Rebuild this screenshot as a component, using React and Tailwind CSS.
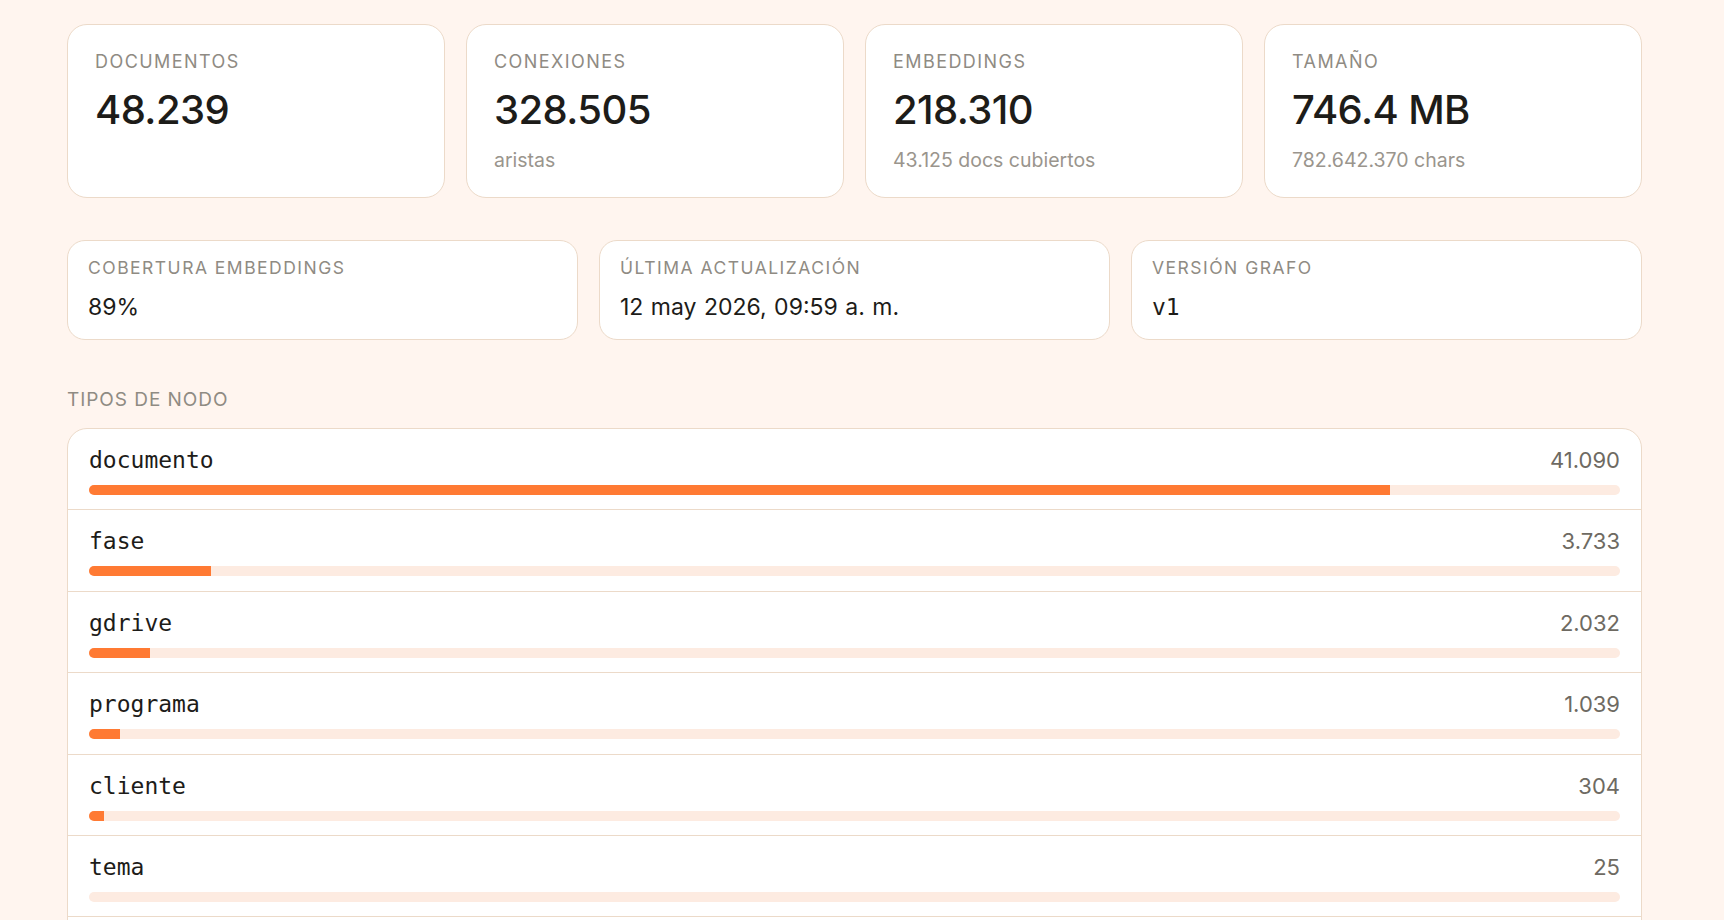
import React from "react";

const sans = { fontFamily: "Inter, 'Noto Sans', sans-serif" };

const stats = [
  { label: "DOCUMENTOS", value: "48.239", sub: "" },
  { label: "CONEXIONES", value: "328.505", sub: "aristas" },
  { label: "EMBEDDINGS", value: "218.310", sub: "43.125 docs cubiertos" },
  { label: "TAMAÑO", value: "746.4 MB", sub: "782.642.370 chars" },
];

const meta = [
  { label: "COBERTURA EMBEDDINGS", value: "89%", mono: false },
  { label: "ÚLTIMA ACTUALIZACIÓN", value: "12 may 2026, 09:59 a. m.", mono: false },
  { label: "VERSIÓN GRAFO", value: "v1", mono: true },
];

const nodes = [
  { name: "documento", count: "41.090", pct: 85 },
  { name: "fase", count: "3.733", pct: 8 },
  { name: "gdrive", count: "2.032", pct: 4 },
  { name: "programa", count: "1.039", pct: 2 },
  { name: "cliente", count: "304", pct: 1 },
  { name: "tema", count: "25", pct: 0 },
  { name: "etiqueta", count: "12", pct: 0 },
];

export default function App() {
  return (
    <div className="min-h-screen bg-[#fff5ef]" style={sans}>
      <div className="ml-[67px] w-[1575px] pt-[24px]">
        <div className="grid grid-cols-4 gap-[21px]">
          {stats.map((s) => (
            <div
              key={s.label}
              className="h-[174px] rounded-[20px] border border-[#ecdac9] bg-white px-[27px] pt-[25px]"
            >
              <div className="text-[18px] leading-[24px] tracking-[0.08em] text-[#8f8b83]">
                {s.label}
              </div>
              <div className="mt-[12px] text-[40px] leading-[48px] font-medium tracking-[-0.015em] text-[#1d1c19]">
                {s.value}
              </div>
              {s.sub && (
                <div className="mt-[13px] text-[19.5px] leading-[26px] text-[#9a958d]">
                  {s.sub}
                </div>
              )}
            </div>
          ))}
        </div>

        <div className="mt-[42px] grid grid-cols-3 gap-[21px]">
          {meta.map((m) => (
            <div
              key={m.label}
              className="h-[100px] rounded-[18px] border border-[#ecdac9] bg-white px-[20px] pt-[16px]"
            >
              <div className="text-[17.5px] leading-[22px] tracking-[0.085em] text-[#8f8b83]">
                {m.label}
              </div>
              <div
                className="mt-[14px] text-[23px] leading-[28px] text-[#1d1c19]"
                style={m.mono ? { fontFamily: "'DejaVu Sans Mono', monospace" } : { wordSpacing: "1px" }}
              >
                {m.value}
              </div>
            </div>
          ))}
        </div>

        <div className="mt-[48px] text-[19px] leading-[24px] tracking-[0.05em] text-[#8f8b83]">
          TIPOS DE NODO
        </div>

        <div className="mt-[16px] overflow-hidden rounded-[20px] border border-[#ecdac9] bg-white">
          {nodes.map((n) => (
            <div key={n.name} className="border-b border-[#ecdac9] px-[21px] pt-[17px] pb-[14.4px]">
              <div className="flex h-[28px] items-baseline justify-between">
                <span
                  className="text-[23px] leading-[28px] text-[#1d1c19]"
                  style={{ fontFamily: "'DejaVu Sans Mono', monospace" }}
                >
                  {n.name}
                </span>
                <span className="text-[22px] leading-[28px] text-[#6e6a62]">{n.count}</span>
              </div>
              <div className="mt-[11px] h-[10px] overflow-hidden rounded-full bg-[#fdebe1]">
                <div className="h-full bg-[#ff7a33]" style={{ width: `${n.pct}%` }} />
              </div>
            </div>
          ))}
        </div>
      </div>
    </div>
  );
}
